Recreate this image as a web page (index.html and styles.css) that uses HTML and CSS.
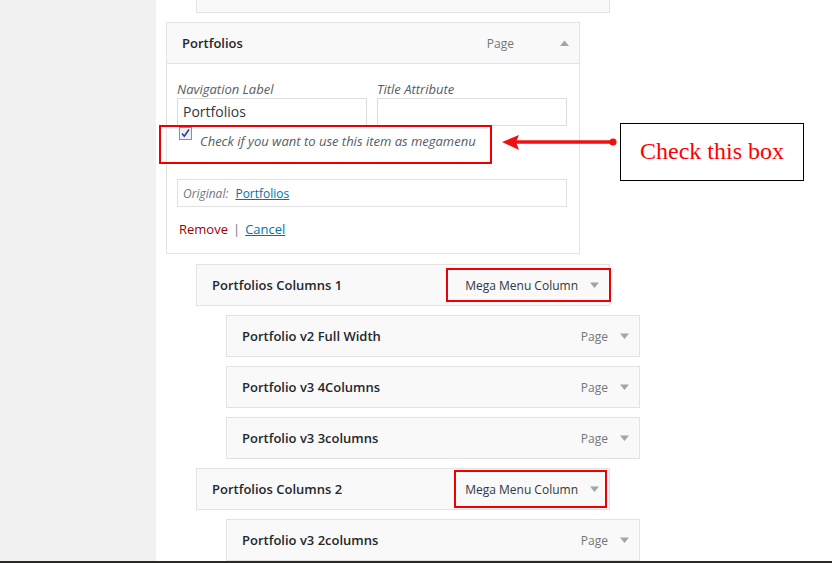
FILE: index.html
```html
<!DOCTYPE html>
<html lang="en">
<head>
<meta charset="utf-8">
<title>Menu structure</title>
<link rel="stylesheet" href="styles.css">
</head>
<body>
<div class="page">
  <div class="screen">
    <aside class="sidebar"></aside>
    <main class="main">
      <div class="stub"></div>

      <div class="panel">
        <div class="panel-head">
          <span class="title">Portfolios</span>
          <span class="type">Page</span>
          <svg class="caret caret-up" width="9" height="6" viewBox="0 0 9 6"><path d="M0 6 L4.5 0.5 L9 6 Z" fill="#a0a5aa"/></svg>
        </div>
        <div class="panel-body">
          <div class="fields">
            <div class="field">
              <span class="lbl">Navigation Label</span>
              <span class="input">Portfolios</span>
            </div>
            <div class="field">
              <span class="lbl">Title Attribute</span>
              <span class="input"></span>
            </div>
          </div>
          <div class="check-row">
            <svg class="checkbox" width="13" height="13" viewBox="0 0 13 13">
              <rect x="0.5" y="0.5" width="12" height="12" fill="#eef0f5" stroke="#8c8f94"/>
              <path d="M3 6.5 L5.3 9.2 L10 2.5" fill="none" stroke="#27408b" stroke-width="1.6"/>
            </svg>
            <span class="check-text">Check if you want to use this item as megamenu</span>
          </div>
          <div class="original">
            <span class="orig-lbl">Original:</span>
            <a class="link" href="#">Portfolios</a>
          </div>
          <div class="actions">
            <a class="remove" href="#">Remove</a>
            <span class="sep">|</span>
            <a class="link cancel" href="#">Cancel</a>
          </div>
        </div>
        <div class="mark mark-check"></div>
      </div>

      <div class="item depth-1 first">
        <span class="title">Portfolios Columns 1</span>
        <span class="type dark">Mega Menu Column</span>
        <svg class="caret" width="9" height="6" viewBox="0 0 9 6"><path d="M0 0.5 L9 0.5 L4.5 6 Z" fill="#a0a5aa"/></svg>
        <div class="mark mark-col1"></div>
      </div>
      <div class="item depth-2">
        <span class="title">Portfolio v2 Full Width</span>
        <span class="type">Page</span>
        <svg class="caret" width="9" height="6" viewBox="0 0 9 6"><path d="M0 0.5 L9 0.5 L4.5 6 Z" fill="#a0a5aa"/></svg>
      </div>
      <div class="item depth-2">
        <span class="title">Portfolio v3 4Columns</span>
        <span class="type">Page</span>
        <svg class="caret" width="9" height="6" viewBox="0 0 9 6"><path d="M0 0.5 L9 0.5 L4.5 6 Z" fill="#a0a5aa"/></svg>
      </div>
      <div class="item depth-2">
        <span class="title">Portfolio v3 3columns</span>
        <span class="type">Page</span>
        <svg class="caret" width="9" height="6" viewBox="0 0 9 6"><path d="M0 0.5 L9 0.5 L4.5 6 Z" fill="#a0a5aa"/></svg>
      </div>
      <div class="item depth-1">
        <span class="title">Portfolios Columns 2</span>
        <span class="type dark">Mega Menu Column</span>
        <svg class="caret" width="9" height="6" viewBox="0 0 9 6"><path d="M0 0.5 L9 0.5 L4.5 6 Z" fill="#a0a5aa"/></svg>
        <div class="mark mark-col2"></div>
      </div>
      <div class="item depth-2">
        <span class="title">Portfolio v3 2columns</span>
        <span class="type">Page</span>
        <svg class="caret" width="9" height="6" viewBox="0 0 9 6"><path d="M0 0.5 L9 0.5 L4.5 6 Z" fill="#a0a5aa"/></svg>
      </div>
    </main>
  </div>
  <div class="strip"></div>

  <svg class="arrow" width="130" height="28" viewBox="0 0 130 28">
    <defs>
      <filter id="blur" x="-10%" y="-100%" width="120%" height="300%">
        <feGaussianBlur stdDeviation="1.5"/>
      </filter>
    </defs>
    <path d="M11 10 L124 10" stroke="#6f6f6f" stroke-width="5" filter="url(#blur)"/>
    <path d="M20 14 L118 14" stroke="#ee1111" stroke-width="3.4"/>
    <path d="M7 14 L24 7 L21 14 L24 22 Z" fill="#ee1111"/>
    <circle cx="118" cy="14" r="3.6" fill="#ee1111"/>
  </svg>
  <div class="callout">Check this box</div>
</div>
</body>
</html>
```
FILE: styles.css
```css
* { box-sizing: border-box; }

html, body {
  margin: 0;
  padding: 0;
  background: #ffffff;
}

body {
  font-family: "Open Sans", "Liberation Sans", sans-serif;
  font-size: 13px;
  color: #23282d;
}

.page {
  position: relative;
  width: 832px;
  height: 563px;
  overflow: hidden;
  display: flex;
  flex-direction: column;
}

.screen {
  display: flex;
  height: 561px;
  overflow: hidden;
}

.sidebar {
  width: 156px;
  flex: none;
  background: #f1f1f1;
}

.main {
  flex: 1;
  background: #ffffff;
  padding-left: 10px;
}

.strip {
  height: 2px;
  background: #2b2a22;
}

/* stub of the item above */
.stub {
  margin-left: 30px;
  width: 414px;
  height: 13px;
  background: #f9f9f9;
  border: 1px solid #e2e2e2;
  border-top: none;
  margin-bottom: 9px;
}

/* expanded item */
.panel {
  position: relative;
  width: 414px;
  border: 1px solid #e2e2e2;
  background: #ffffff;
}

.panel-head {
  display: flex;
  align-items: center;
  height: 41px;
  padding: 0 10px 0 15px;
  background: #f9f9f9;
  border-bottom: 1px solid #e2e2e2;
}

.title {
  flex: 1;
  font-weight: 600;
  font-size: 13px;
  color: #23282d;
}

.type {
  font-size: 12px;
  color: #72777c;
}

.type.dark {
  color: #32373c;
}

.caret {
  display: block;
  flex: none;
  margin-left: 12px;
}

.caret-up {
  margin-left: 46px;
}

.panel-body {
  padding: 16px 12px 15px 10px;
}

.fields {
  display: flex;
  gap: 10px;
}

.field {
  display: flex;
  flex-direction: column;
  width: 190px;
}

.lbl {
  font-style: italic;
  line-height: 18px;
  color: #555d66;
}

.input {
  display: block;
  height: 28px;
  border: 1px solid #dddddd;
  padding: 0 5px;
  font-size: 14px;
  line-height: 26px;
  color: #32373c;
  background: #ffffff;
}

.check-row {
  display: flex;
  align-items: flex-start;
  margin-top: 1px;
}

.checkbox {
  display: block;
  flex: none;
  margin-left: 2px;
}

.check-text {
  margin-left: 8px;
  padding-top: 5px;
  line-height: 18px;
  font-style: italic;
  color: #555d66;
}

.original {
  margin-top: 29px;
  height: 28px;
  border: 1px solid #e2e2e2;
  padding: 0 5px;
  display: flex;
  align-items: center;
  gap: 7px;
  font-size: 12px;
}

.orig-lbl {
  font-style: italic;
  color: #72777c;
}

.link {
  color: #0073aa;
  text-decoration: underline;
}

.actions {
  margin-top: 13px;
  padding-left: 2px;
  display: flex;
  align-items: center;
  line-height: 18px;
  gap: 5px;
}

.remove {
  color: #a00000;
  text-decoration: none;
}

.sep {
  color: #72777c;
}

/* collapsed items */
.item {
  position: relative;
  display: flex;
  align-items: center;
  width: 414px;
  height: 42px;
  padding: 0 10px 0 15px;
  background: #f9f9f9;
  border: 1px solid #e2e2e2;
  margin-top: 9px;
}

.item.first {
  margin-top: 10px;
}

.depth-1 { margin-left: 30px; }
.depth-2 { margin-left: 60px; }

/* annotations */
.mark {
  position: absolute;
  border: 2px solid #ee0000;
}

.mark-check {
  left: -8px;
  top: 102px;
  width: 333px;
  height: 39px;
}

.mark-col1 {
  left: 249px;
  top: 3px;
  width: 165px;
  height: 34px;
}

.mark-col2 {
  left: 257px;
  top: 1px;
  width: 153px;
  height: 38px;
}

.arrow {
  position: absolute;
  left: 495px;
  top: 128px;
}

.callout {
  position: absolute;
  left: 620px;
  top: 123px;
  width: 184px;
  height: 58px;
  border: 1px solid #000000;
  background: #ffffff;
  display: flex;
  align-items: center;
  justify-content: center;
  font-family: "Liberation Serif", "Times New Roman", serif;
  font-size: 24px;
  color: #ff0000;
  padding-bottom: 1px;
}
```
